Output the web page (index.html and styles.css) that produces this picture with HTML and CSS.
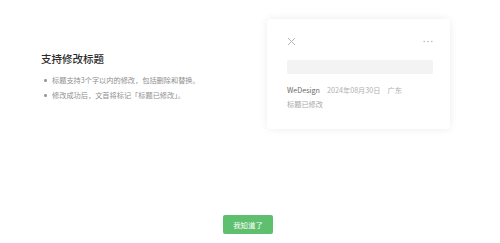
FILE: index.html
```html
<!DOCTYPE html>
<html lang="zh">
<head>
<meta charset="utf-8">
<link rel="stylesheet" href="styles.css">
</head>
<body>
<div class="page">
  <div class="stage">
    <div class="intro">
      <h1 class="title">支持修改标题</h1>
      <ul class="points">
        <li>标题支持3个字以内的修改，包括删除和替换。</li>
        <li>修改成功后，文首将标记「标题已修改」。</li>
      </ul>
    </div>
    <div class="card">
      <div class="card-top">
        <svg class="icon-close" width="9" height="9" viewBox="0 0 9 9"><path d="M1 1L8 8M8 1L1 8" stroke="#b5b5b5" stroke-width="1" fill="none"/></svg>
        <svg class="icon-more" width="10" height="3" viewBox="0 0 10 3"><circle cx="1.2" cy="1.5" r="0.8" fill="#b5b5b5"/><circle cx="5" cy="1.5" r="0.8" fill="#b5b5b5"/><circle cx="8.8" cy="1.5" r="0.8" fill="#b5b5b5"/></svg>
      </div>
      <div class="card-bar"></div>
      <div class="card-meta">
        <span class="author">WeDesign</span>
        <span class="muted">2024年08月30日</span>
        <span class="muted">广东</span>
      </div>
      <div class="card-note">标题已修改</div>
    </div>
  </div>
  <div class="footer">
    <button class="btn">我知道了</button>
  </div>
</div>
</body>
</html>
```
FILE: styles.css
```css
html, body {
  margin: 0;
  padding: 0;
  background: #ffffff;
}
body {
  font-family: "Noto Sans CJK SC", "Noto Sans", sans-serif;
  width: 500px;
  height: 243px;
  overflow: hidden;
}
.page {
  display: flex;
  flex-direction: column;
}
.stage {
  display: flex;
  align-items: center;
  padding: 19px 0 0 41px;
}
.intro {
  width: 226px;
  padding-top: 6px;
}
.title {
  margin: 0;
  font-size: 10.5px;
  line-height: 14px;
  font-weight: 500;
  color: #2b2b2b;
}
.points {
  list-style: none;
  margin: 7px 0 0;
  padding: 0;
}
.points li {
  position: relative;
  padding-left: 11px;
  font-size: 7.2px;
  line-height: 15px;
  color: #8f8f8f;
}
.points li::before {
  content: "";
  position: absolute;
  left: 3px;
  top: 6.5px;
  width: 2.5px;
  height: 2.5px;
  border-radius: 50%;
  background: #9a9a9a;
}
.card {
  width: 183px;
  height: 110px;
  box-sizing: border-box;
  padding: 17px 17px 0 20px;
  background: #fff;
  border-radius: 4px;
  box-shadow: 0 0 8px rgba(0, 0, 0, 0.08);
}
.card-top {
  display: flex;
  justify-content: space-between;
  align-items: center;
  height: 10px;
}
.card-bar {
  margin-top: 14px;
  height: 14px;
  background: #f3f3f3;
  border-radius: 2px;
  width: 146px;
}
.card-meta {
  display: flex;
  gap: 7px;
  margin-top: 10px;
  font-size: 7.2px;
  line-height: 12px;
}
.author {
  color: #6a6a6a;
  font-weight: 400;
}
.muted {
  color: #b0b0b0;
}
.card-note {
  margin-top: 2px;
  font-size: 7.2px;
  line-height: 12px;
  color: #a8a8a8;
}
.footer {
  display: flex;
  justify-content: center;
  padding-right: 4px;
  margin-top: 86px;
}
.btn {
  width: 50px;
  height: 19px;
  border: none;
  border-radius: 2px;
  background: #5ec06e;
  color: #fff;
  font-family: "Noto Sans CJK SC", sans-serif;
  font-size: 7.4px;
  padding: 0;
}
```
